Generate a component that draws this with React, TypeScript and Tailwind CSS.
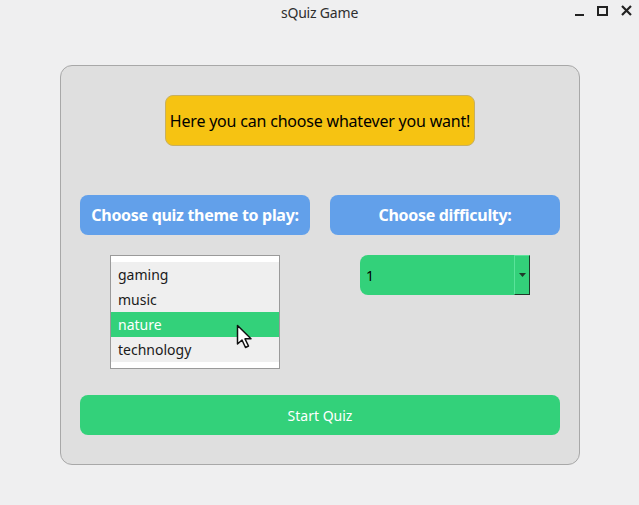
import React, { useState } from 'react';

const themes = ['gaming', 'music', 'nature', 'technology'];

export default function App() {
  const [selected, setSelected] = useState('nature');

  return (
    <div className="w-[639px] h-[505px] bg-[#efeff0] flex flex-col font-['Noto_Sans',sans-serif] text-black overflow-hidden">
      {/* title bar */}
      <div className="relative h-[25px] flex items-center justify-center text-[14px] text-[#2e2e2e]">
        <span className="tracking-[-0.2px]">sQuiz Game</span>
        <div className="absolute right-[7px] top-[5px] flex items-center gap-[13px]">
          <div className="w-[9px] h-[2px] bg-[#222] mt-[8px]" />
          <div className="w-[11px] h-[10px] border-2 border-[#222]" />
          <svg width="11" height="11" viewBox="0 0 11 11">
            <path d="M1 1 L10 10 M10 1 L1 10" stroke="#222" strokeWidth="2.2" />
          </svg>
        </div>
      </div>

      <div className="flex-1 pl-[60px] pt-[40px] pb-[40px]">
        <div className="w-[520px] h-[400px] bg-[#dfdfdf] border border-[#a8a8a8] rounded-[12px] px-[19px] pt-[29px] flex flex-col">
          <div className="flex justify-center">
            <div className="w-[310px] h-[51px] bg-[#f6c312] border border-[#c8b060] rounded-[8px] flex items-center justify-center text-[16px] tracking-[-0.2px]">
              Here you can choose whatever you want!
            </div>
          </div>

          <div className="mt-[49px] grid grid-cols-2 gap-[20px]">
            <div className="h-[40px] bg-[#62a0ea] rounded-[8px] flex items-center justify-center text-white font-bold text-[16px] tracking-[-0.3px]">
              Choose quiz theme to play:
            </div>
            <div className="h-[40px] bg-[#62a0ea] rounded-[8px] flex items-center justify-center text-white font-bold text-[16px] tracking-[-0.3px]">
              Choose difficulty:
            </div>
          </div>

          <div className="mt-[20px] grid grid-cols-2 gap-[20px] h-[114px]">
            <div className="pl-[30px]">
              <div className="relative w-[170px] h-[114px] bg-white border border-[#9a9a9a] py-[6px]">
                {themes.map((t) => (
                  <div
                    key={t}
                    onClick={() => setSelected(t)}
                    className={
                      selected === t
                        ? 'h-[25px] flex items-center px-[7px] text-[14px] bg-[#33d17a] text-white'
                        : 'h-[25px] flex items-center px-[7px] text-[14px] bg-[#efefef] text-[#1a1a1a]'
                    }
                  >
                    {t}
                  </div>
                ))}
                <svg className="absolute left-[125px] top-[68px]" width="18" height="26" viewBox="0 0 18 26">
                  <path
                    d="M1.5 1.5 L1.5 20 L6 16 L9.5 23.5 L12.5 22 L9 14.8 L15 14.8 Z"
                    fill="#fff"
                    stroke="#111"
                    strokeWidth="1.5"
                    strokeLinejoin="round"
                  />
                </svg>
              </div>
            </div>
            <div className="pl-[30px]">
              <div className="w-[170px] h-[40px] bg-[#33d17a] rounded-l-[8px] flex items-center">
                <span className="flex-1 pl-[6px] text-[14px]">1</span>
                <div className="w-[16px] h-[40px] border border-[#5ae39a] border-r-[#1f3a2a] border-b-[#1f3a2a] flex items-center justify-center">
                  <svg width="7" height="4" viewBox="0 0 7 4">
                    <path d="M0 0 L7 0 L3.5 4 Z" fill="#1f3a2a" />
                  </svg>
                </div>
              </div>
            </div>
          </div>

          <button className="mt-[26px] h-[40px] w-full bg-[#33d17a] rounded-[8px] text-white text-[14px]">
            Start Quiz
          </button>
        </div>
      </div>
    </div>
  );
}
